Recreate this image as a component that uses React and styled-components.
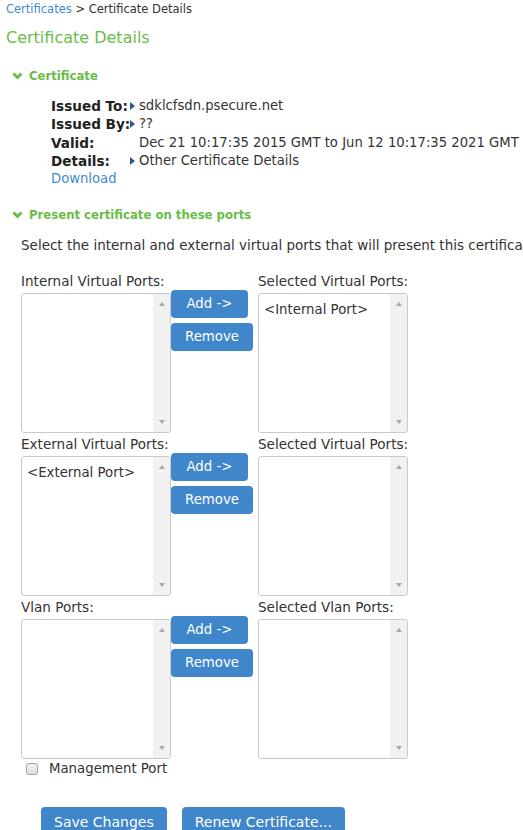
import React from 'react';
import styled, { createGlobalStyle } from 'styled-components';

const GlobalStyle = createGlobalStyle`
  html, body {
    margin: 0;
    padding: 0;
    background: #fff;
    overflow: hidden;
  }
  body {
    font-family: "DejaVu Sans", Verdana, sans-serif;
    color: #333;
  }
`;

const GREEN = '#6abd47';
const BLUE = '#3f86cb';
const LINK = '#3f8bd0';

const Page = styled.div`
  width: 523px;
  height: 830px;
  overflow: hidden;
`;

const Breadcrumb = styled.div`
  padding-left: 6px;
  font-size: 11.5px;
  line-height: 18px;
  white-space: nowrap;

  a {
    color: ${LINK};
    text-decoration: none;
  }
`;

const Title = styled.h1`
  margin: 10px 0 0 6px;
  font-size: 16px;
  line-height: 20px;
  font-weight: normal;
  color: ${GREEN};
`;

const SectionHeader = styled.div`
  display: flex;
  align-items: center;
  gap: 6px;
  margin: ${(p) => p.$top}px 0 0 12px;
  font-size: 11.7px;
  line-height: 18px;
  font-weight: bold;
  color: ${GREEN};
  white-space: nowrap;
`;

const DetailsGrid = styled.div`
  display: grid;
  grid-template-columns: 79px auto;
  margin: 12px 0 0 51px;
  font-size: 13.2px;
  line-height: 18.25px;
  white-space: nowrap;
`;

const Label = styled.div`
  font-size: 13.6px;
  font-weight: bold;
  color: #222;
`;

const Value = styled.div`
  display: flex;
  align-items: center;
  gap: 3px;
  padding-left: ${(p) => (p.$plain ? 9 : 0)}px;
`;

const Pointer = styled.span`
  width: 0;
  height: 0;
  border-top: 4.5px solid transparent;
  border-bottom: 4.5px solid transparent;
  border-left: 5px solid #27598a;
  margin-right: 1px;
`;

const DownloadLink = styled.a`
  grid-column: 1 / span 2;
  color: ${LINK};
  text-decoration: none;
`;

const Description = styled.p`
  margin: 12px 0 0 21px;
  font-size: 13.5px;
  line-height: 18px;
  white-space: nowrap;
`;

const Ports = styled.div`
  display: flex;
  flex-direction: column;
  gap: 3px;
  margin: 18.5px 0 0 21px;
`;

const PortRow = styled.div`
  display: grid;
  grid-template-columns: 150px 87px 150px;
`;

const PortColumn = styled.div`
  display: flex;
  flex-direction: column;
  gap: 4px;
`;

const PortLabel = styled.div`
  font-size: 13.55px;
  line-height: 16px;
  white-space: nowrap;
`;

const ListBox = styled.div`
  display: flex;
  height: 140px;
  box-sizing: border-box;
  border: 1px solid #c9c9c9;
  border-radius: 3px;
  overflow: hidden;
  background: #fff;
`;

const Options = styled.div`
  flex: 1;
  padding: 8px 5px;
  font-size: 13.3px;
  line-height: 16px;
  white-space: nowrap;
  overflow: hidden;
`;

const ScrollTrack = styled.div`
  width: 17px;
  background: #f1f1f1;
  display: flex;
  flex-direction: column;
  justify-content: space-between;
  align-items: center;
  padding: 8px 0;
  box-sizing: border-box;
`;

const Arrow = styled.span`
  width: 0;
  height: 0;
  border-left: 3.5px solid transparent;
  border-right: 3.5px solid transparent;
  ${(p) => (p.$down ? 'border-top' : 'border-bottom')}: 4px solid #a8a8a8;
`;

const ButtonStack = styled.div`
  display: flex;
  flex-direction: column;
  align-items: flex-start;
  gap: 5px;
  padding-top: 17px;
`;

const Button = styled.button`
  height: ${(p) => (p.$large ? 30 : 28)}px;
  padding: 0 ${(p) => p.$pad ?? 14}px;
  border: none;
  border-radius: 4px;
  background: ${BLUE};
  color: #fff;
  font-family: "DejaVu Sans", Verdana, sans-serif;
  font-size: ${(p) => (p.$large ? 14 : 13.3)}px;
  white-space: nowrap;
  cursor: pointer;
`;

const CheckRow = styled.label`
  display: flex;
  align-items: center;
  gap: 11px;
  margin: 1.5px 0 0 26px;
  font-size: 13.3px;
  line-height: 18px;
`;

const CheckBox = styled.span`
  width: 12px;
  height: 12px;
  box-sizing: border-box;
  border: 1px solid #a3a3a3;
  border-radius: 3px;
  background: linear-gradient(#f4f4f4, #dedede);
`;

const Actions = styled.div`
  display: flex;
  gap: 15px;
  margin: 29px 0 0 41px;
`;

function Chevron() {
  return (
    <svg width="11" height="8" viewBox="0 0 11 8">
      <polyline
        points="1.5,1.5 5.5,5.5 9.5,1.5"
        fill="none"
        stroke={GREEN}
        strokeWidth="3"
      />
    </svg>
  );
}

function PortList({ items = [] }) {
  return (
    <ListBox>
      <Options>
        {items.map((item) => (
          <div key={item}>{item}</div>
        ))}
      </Options>
      <ScrollTrack>
        <Arrow />
        <Arrow $down />
      </ScrollTrack>
    </ListBox>
  );
}

const portGroups = [
  {
    left: 'Internal Virtual Ports:',
    right: 'Selected Virtual Ports:',
    leftItems: [],
    rightItems: ['<Internal Port>'],
  },
  {
    left: 'External Virtual Ports:',
    right: 'Selected Virtual Ports:',
    leftItems: ['<External Port>'],
    rightItems: [],
  },
  {
    left: 'Vlan Ports:',
    right: 'Selected Vlan Ports:',
    leftItems: [],
    rightItems: [],
  },
];

export default function App() {
  return (
    <Page>
      <GlobalStyle />
      <Breadcrumb>
        <a href="#">Certificates</a> &gt; Certificate Details
      </Breadcrumb>
      <Title>Certificate Details</Title>

      <SectionHeader $top={19}>
        <Chevron />
        Certificate
      </SectionHeader>
      <DetailsGrid>
        <Label>Issued To:</Label>
        <Value>
          <Pointer />
          sdklcfsdn.psecure.net
        </Value>
        <Label>Issued By:</Label>
        <Value>
          <Pointer />
          ??
        </Value>
        <Label>Valid:</Label>
        <Value $plain>Dec 21 10:17:35 2015 GMT to Jun 12 10:17:35 2021 GMT</Value>
        <Label>Details:</Label>
        <Value>
          <Pointer />
          Other Certificate Details
        </Value>
        <DownloadLink href="#">Download</DownloadLink>
      </DetailsGrid>

      <SectionHeader $top={18}>
        <Chevron />
        Present certificate on these ports
      </SectionHeader>
      <Description>
        Select the internal and external virtual ports that will present this certificate.
      </Description>

      <Ports>
        {portGroups.map((g) => (
          <PortRow key={g.left}>
            <PortColumn>
              <PortLabel>{g.left}</PortLabel>
              <PortList items={g.leftItems} />
            </PortColumn>
            <ButtonStack>
              <Button $pad={15.5}>Add -&gt;</Button>
              <Button>Remove</Button>
            </ButtonStack>
            <PortColumn>
              <PortLabel>{g.right}</PortLabel>
              <PortList items={g.rightItems} />
            </PortColumn>
          </PortRow>
        ))}
      </Ports>

      <CheckRow>
        <CheckBox />
        Management Port
      </CheckRow>

      <Actions>
        <Button $large $pad={13}>Save Changes</Button>
        <Button $large $pad={13}>Renew Certificate...</Button>
      </Actions>
    </Page>
  );
}
